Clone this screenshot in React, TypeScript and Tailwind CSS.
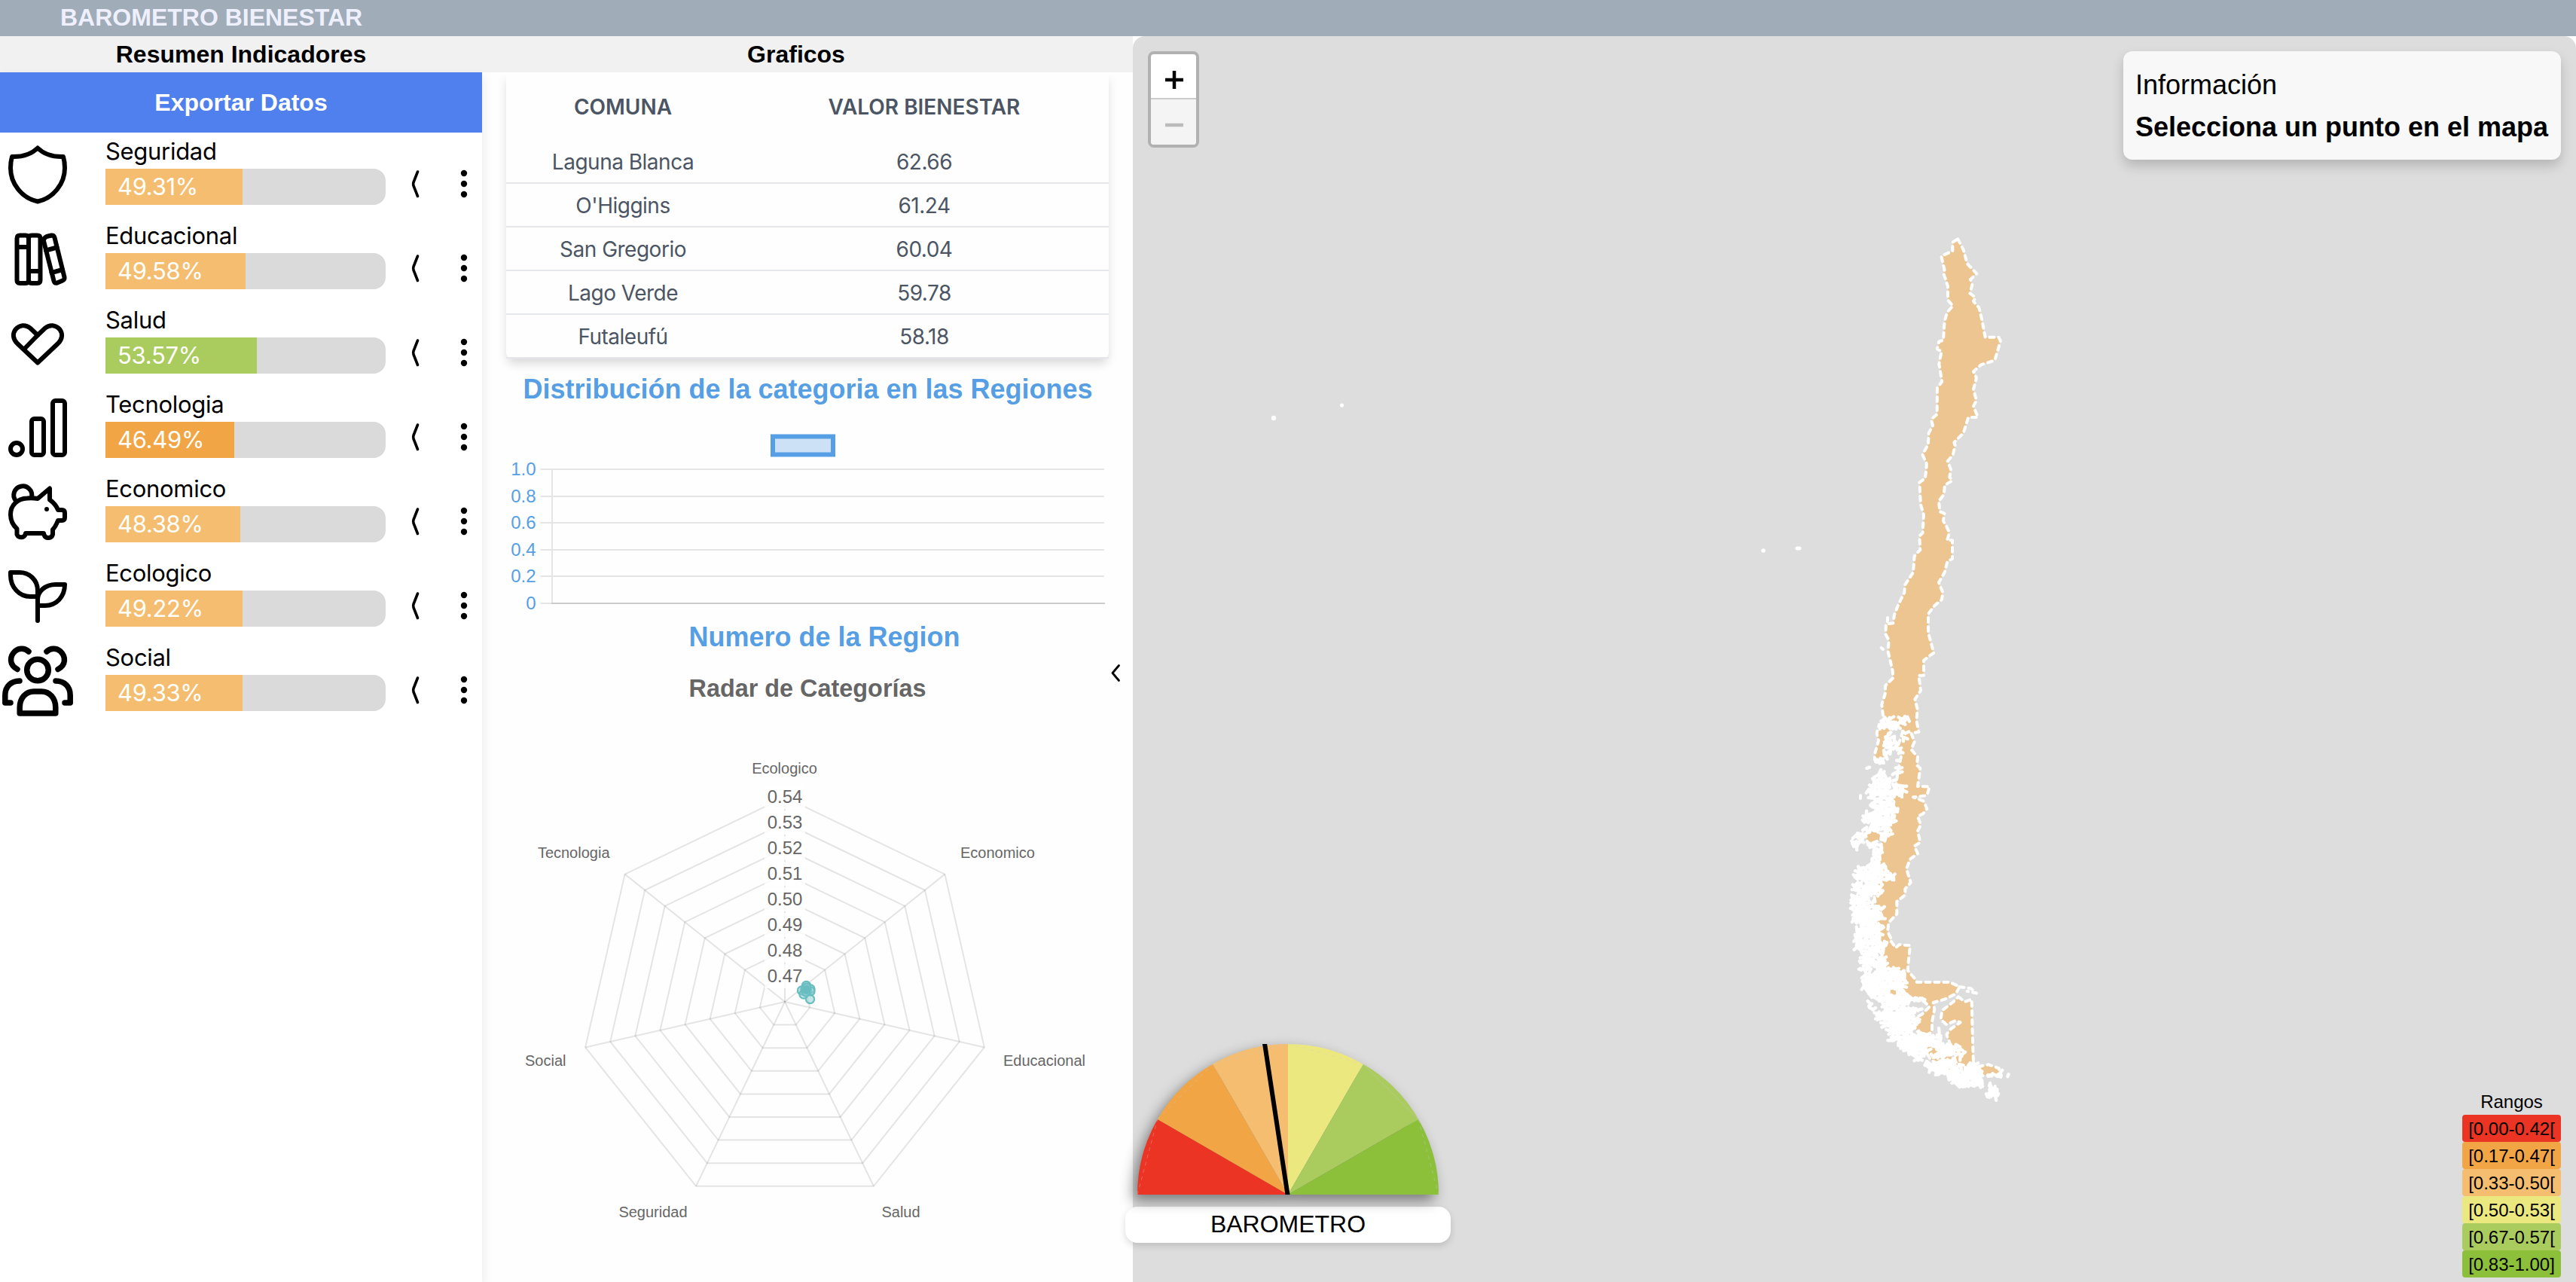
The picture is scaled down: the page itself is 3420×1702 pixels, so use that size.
import React from "react";

const HELV = "font-['Liberation_Sans',Arial,sans-serif]";

const strokeProps = {
  fill: "none",
  stroke: "#000",
  strokeWidth: 6,
  strokeLinecap: "round" as const,
  strokeLinejoin: "round" as const,
};

function Icon({ children }: { children: React.ReactNode }) {
  return (
    <svg className="h-28 w-[100px] shrink-0" viewBox="0 0 100 112" {...strokeProps}>
      {children}
    </svg>
  );
}

const ShieldIcon = () => (
  <Icon>
    <path d="M50 20.5C58 28.5 68 32.5 84 32C85.500 37 86 42 86 47C86 68 71 87 50 91.500C29 87 14 68 14 47C14 42 14.500 37 16 32C32 32.500 42 28.500 50 20.500Z" />
  </Icon>
);

const BooksIcon = () => (
  <Icon>
    <path d="M26.500 24.500H34Q38 24.500 38 28.500V84Q38 88 34 88H26.500Q22.500 88 22.500 84V28.500Q22.500 24.500 26.500 24.500Z" />
    <path d="M38 28.500Q38 24.500 42 24.500H49.500Q53.500 24.500 53.500 28.500V84Q53.500 88 49.500 88H42Q38 88 38 84" />
    <path d="M23 40H38M38 72H53" />
    <path d="M62 26L68 24.500Q71.500 24 72.500 27.500L85.500 80Q86 83.500 83 84.500L76 87.500Q72.500 88.500 71.500 85L58 32Q57.500 28 62 26Z" />
    <path d="M61 44.500L75.500 40.500M68.500 74L83 70" />
  </Icon>
);

const HeartIcon = () => (
  <Icon>
    <path d="M50 81.500L23 56C17 50 16.500 43 20.500 37.500C26 31 34 30.500 40 35.500L50 45L60 35.500C66 30.500 74 31 79.500 37.500C83.500 43 83 50 77 56Z" />
    <path d="M50 45L33 62.500" />
  </Icon>
);

const BarsIcon = () => (
  <Icon>
    <circle cx="22" cy="84" r="8" />
    <rect x="42" y="44" width="16" height="48" rx="3.500" />
    <rect x="70" y="20" width="16" height="72" rx="3.500" />
  </Icon>
);

const PiggyIcon = () => (
  <Icon>
    <path d="M50 38L66 24.500V39.500C71 43 75 48 77 53H82Q86 53 86 57V63Q86 67 82 67H77C75 72 73 76 70 79V85.500A6 6 0 0 1 58.500 86L58 84H34L33.500 86A6 6 0 0 1 22.500 85.500V78C17 73 14 66 14 59C14 47 23 38 36 37.500Q44 37 50 38Z" />
    <path d="M21 41A12 12 0 1 1 42 36" />
    <circle cx="62" cy="52" r="3" fill="#000" stroke="none" />
  </Icon>
);

const PlantIcon = () => (
  <Icon>
    <path d="M50 88V48C50 34 39 24 26 24H14V28C14 44 26 56 40 56H50" />
    <path d="M50 60C50 49 60 40 74 40H86C86 56 75 68 60 68H50" />
  </Icon>
);

const PeopleIcon = () => (
  <Icon>
    <g strokeWidth="7.500">
      <circle cx="50" cy="41.500" r="14.300" />
      <path d="M26.200 99V91C26.200 79 34 70 45 70H55C66 70 73.800 79 73.800 91V99Z" />
      <path d="M38 17C33 12 25 12 20 16.500C12 24 12.500 35 23 40.500" />
      <path d="M62 17C67 12 75 12 80 16.500C88 24 87.500 35 77 40.500" />
      <path d="M26 56C14 56 6.800 64 6.800 75V85H14" />
      <path d="M74 56C86 56 93.200 64 93.200 75V85H86" />
    </g>
  </Icon>
);

const indicators = [
  { name: "Seguridad", value: 49.31, color: "#f5bd6f", icon: <ShieldIcon /> },
  { name: "Educacional", value: 49.58, color: "#f5bd6f", icon: <BooksIcon /> },
  { name: "Salud", value: 53.57, color: "#aacb5d", icon: <HeartIcon /> },
  { name: "Tecnologia", value: 46.49, color: "#f2a544", icon: <BarsIcon /> },
  { name: "Economico", value: 48.38, color: "#f5bd6f", icon: <PiggyIcon /> },
  { name: "Ecologico", value: 49.22, color: "#f5bd6f", icon: <PlantIcon /> },
  { name: "Social", value: 49.33, color: "#f5bd6f", icon: <PeopleIcon /> },
];

function IndicatorRow({ item }: { item: (typeof indicators)[number] }) {
  return (
    <div className="flex h-28">
      {item.icon}
      <div className="ml-10 w-[372px] font-[Inter,sans-serif] text-[31px] tracking-[-0.3px]">
        <div className="h-12 leading-[49px] text-black">{item.name}</div>
        <div className="h-12 overflow-hidden rounded-r-2xl bg-[#dadada]">
          <div
            className="h-12 pl-4 leading-[48px] text-white"
            style={{ width: `${Math.round(item.value)}%`, backgroundColor: item.color }}
          >
            {item.value.toFixed(2)}%
          </div>
        </div>
      </div>
      <svg className="ml-8 h-28 w-4" viewBox="0 0 16 112" {...strokeProps} strokeWidth="3.600">
        <path d="M10.500 52L5 66Q4.300 68.300 5 70.500L10.500 84.500" />
      </svg>
      <svg className="ml-12 h-28 w-4" viewBox="0 0 16 112">
        <circle cx="8" cy="54" r="4.200" />
        <circle cx="8" cy="68" r="4.200" />
        <circle cx="8" cy="82" r="4.200" />
      </svg>
    </div>
  );
}

const comunas: [string, string][] = [
  ["Laguna Blanca", "62.66"],
  ["O'Higgins", "61.24"],
  ["San Gregorio", "60.04"],
  ["Lago Verde", "59.78"],
  ["Futaleufú", "58.18"],
];

function ComunaTable() {
  return (
    <div className="mx-8 h-[380px] rounded-b-lg bg-[#fefefe] font-[Inter,sans-serif] text-[28px] tracking-[-0.5px] text-[#4b5563] shadow-[0_8px_14px_-2px_rgba(0,0,0,0.16)]">
      <div className="grid h-[90px] grid-cols-[310px_490px] items-center pt-0.5 text-center font-semibold tracking-normal">
        <div>COMUNA</div>
        <div>VALOR BIENESTAR</div>
      </div>
      {comunas.map(([name, value]) => (
        <div
          key={name}
          className="grid h-[58px] grid-cols-[310px_490px] items-center border-b-2 border-gray-200 pt-0.5 text-center"
        >
          <div>{name}</div>
          <div>{value}</div>
        </div>
      ))}
    </div>
  );
}

function DistributionChart() {
  const ticks = ["1.0", "0.8", "0.6", "0.4", "0.2", "0"];
  const ys = [147, 183, 218, 254, 289, 325];
  return (
    <svg className={`block h-[404px] w-[864px] ${HELV}`} viewBox="0 0 864 404">
      <text x="432.500" y="53" fontSize="36" fontWeight="700" textAnchor="middle" fill="#579fe4">
        Distribución de la categoria en las Regiones
      </text>
      <rect x="386" y="103.500" width="80" height="24" fill="#cce1f6" stroke="#579fe4" strokeWidth="6" />
      {ticks.map((t, i) => (
        <g key={t}>
          <line x1="77.500" x2="826" y1={ys[i]} y2={ys[i]} stroke="#e5e5e5" strokeWidth="2" />
          <text x="71.500" y={ys[i] + 7.500} fontSize="24" textAnchor="end" fill="#579fe4">
            {t}
          </text>
        </g>
      ))}
      <line x1="93" x2="93" y1="147" y2="325" stroke="#e5e5e5" strokeWidth="2" />
      <line x1="92" x2="827" y1="325" y2="325" stroke="#cbcbcb" strokeWidth="2" />
      <text x="274.500" y="382" fontSize="36" fontWeight="700" fill="#579fe4">
        Numero de la Region
      </text>
    </svg>
  );
}

const RC = { x: 402, y: 450 };

function radarPoint(i: number, r: number): [number, number] {
  const a = (i * 2 * Math.PI) / 7;
  return [RC.x + Math.sin(a) * r, RC.y - Math.cos(a) * r];
}

function RadarChart() {
  const R = 271.7;
  const ticks = ["0.47", "0.48", "0.49", "0.50", "0.51", "0.52", "0.53", "0.54"];
  const labels: [string, number, number, "start" | "middle" | "end"][] = [
    ["Ecologico", 401.5, 146.5, "middle"],
    ["Economico", 635, 258.5, "start"],
    ["Educacional", 692, 534.5, "start"],
    ["Salud", 556, 736, "middle"],
    ["Seguridad", 227, 736, "middle"],
    ["Social", 111.5, 534.5, "end"],
    ["Tecnologia", 169.5, 258.5, "end"],
  ];
  const dots = [
    [430.5, 428.5],
    [424.5, 435],
    [436, 433],
    [429, 433],
    [432, 436],
    [427, 440],
    [436, 436],
    [431, 431],
    [430, 437],
    [435.5, 446.5],
  ];
  return (
    <svg className={`block h-[802px] w-[864px] ${HELV}`} viewBox="0 0 864 802">
      <text x="274.500" y="45" fontSize="32.400" fontWeight="700" fill="#666">
        Radar de Categorías
      </text>
      <g fill="none" stroke="#000" strokeOpacity="0.1" strokeWidth="2">
        {ticks.map((t, k) => (
          <polygon
            key={t}
            points={[0, 1, 2, 3, 4, 5, 6].map((i) => radarPoint(i, (R * (k + 1)) / 8).join(",")).join(" ")}
          />
        ))}
        {[0, 1, 2, 3, 4, 5, 6].map((i) => {
          const [x, y] = radarPoint(i, R);
          return <line key={i} x1={RC.x} y1={RC.y} x2={x} y2={y} />;
        })}
      </g>
      {ticks.map((t, k) => {
        const y = RC.y - (R * (k + 1)) / 8;
        return (
          <g key={t}>
            <rect x={RC.x - 27} y={y - 16} width="54" height="32" fill="#fff" fillOpacity="0.8" />
            <text x={RC.x} y={y + 7.500} fontSize="24" textAnchor="middle" fill="#666">
              {t}
            </text>
          </g>
        );
      })}
      {labels.map(([t, x, y, anchor]) => (
        <text key={t} x={x} y={y} fontSize="20" textAnchor={anchor} fill="#666">
          {t}
        </text>
      ))}
      <g fill="#8fd0d1" fillOpacity="0.55" stroke="#68bdc0" strokeWidth="2.200">
        {dots.map(([x, y], i) => (
          <circle key={i} cx={x} cy={y} r="5.600" />
        ))}
      </g>
      <circle cx="430.500" cy="434" r="6" fill="#68bdc0" />
    </svg>
  );
}

type Pt = [number, number];

function shift(dx: number, dy: number, flat: number[]): Pt[] {
  const out: Pt[] = [];
  for (let i = 0; i < flat.length; i += 2) out.push([flat[i] + dx, flat[i + 1] + dy]);
  return out;
}

const toPath = (pts: Pt[]) => "M" + pts.map((p) => p.join(" ")).join("L") + "Z";

const mainland = toPath([
  ...shift(90, 0, [
    418, 52, 430, 75, 440, 95, 455, 150, 493, 190, 468, 213, 475, 235, 466, 268, 488, 285, 480, 300, 502, 325, 513, 370,
    527, 443, 580, 443, 588, 458, 565, 535, 510, 553, 480, 580, 492, 605, 480, 650, 492, 695, 480, 718, 498, 762, 460,
    762, 440, 825, 403, 862, 407, 875, 398, 912, 377, 937, 390, 970,
  ]),
  ...shift(90, 960, [
    385, 40, 395, 55, 366, 72, 362, 110, 342, 135, 346, 178, 364, 185, 360, 215, 372, 235, 384, 262, 375, 292, 396, 292,
    396, 365, 376, 377, 365, 420, 342, 460, 358, 500, 354, 528, 325, 552, 300, 585, 300, 660, 322, 740, 282, 770, 282,
    830, 262, 830, 270, 890, 247, 925, 257, 965, 253, 1010, 262, 1055,
  ]),
  ...shift(0, 1890, [
    322, 130, 335, 165, 322, 195, 348, 225, 345, 258, 358, 270, 348, 342, 395, 343, 385, 378, 330, 385, 370, 400, 385,
    430, 370, 450, 348, 462, 360, 495, 348, 520, 358, 565, 335, 580, 348, 610, 318, 632, 303, 670, 320, 725, 298, 750,
    298, 775, 265, 800, 265, 850, 232, 885, 228, 920, 240, 945,
  ]),
  ...shift(0, 2790, [
    236, 50, 260, 85, 275, 72, 318, 76, 312, 130, 308, 175, 340, 212, 345, 222, 475, 222, 515, 240, 500, 268, 455, 290,
    410, 303, 415, 330, 405, 380, 405, 420, 385, 432, 345, 418, 330, 395, 355, 380, 345, 360, 365, 350, 395, 320, 375,
    300, 335, 285, 300, 300, 280, 330, 235, 260, 215, 150, 200, 90, 195, 0,
  ]),
  ...shift(0, 1890, [
    175, 780, 170, 720, 190, 660, 200, 600, 205, 560, 230, 520, 250, 440, 255, 380, 270, 280, 285, 210, 270, 180, 290,
    120, 245, 85, 215, 90, 207, 60,
  ]),
  ...shift(90, 960, [
    120, 990, 115, 945, 128, 905, 130, 870, 160, 840, 158, 810, 140, 735, 143, 690, 130, 665, 132, 625, 160, 622, 165,
    590, 180, 550, 205, 500, 207, 470, 240, 420, 245, 355, 268, 330, 265, 275, 278, 262, 282, 190, 270, 150, 265, 62,
    288, 45, 293, 0,
  ]),
  ...shift(90, 0, [
    293, 945, 277, 910, 300, 870, 302, 825, 318, 795, 312, 770, 335, 750, 336, 645, 355, 620, 343, 550, 353, 500, 336,
    490, 343, 460, 360, 455, 365, 380, 375, 345, 398, 318, 378, 295, 378, 240, 360, 185, 365, 175, 352, 120, 397, 100,
    397, 65,
  ]),
]);

const islands = [
  toPath(
    shift(0, 2790, [
      510, 280, 535, 300, 563, 290, 566, 420, 570, 548, 530, 560, 500, 540, 480, 475, 463, 430, 480, 408, 518, 382, 500,
      375, 462, 390, 440, 370, 445, 335, 490, 300,
    ]),
  ),
  toPath(shift(0, 1890, [195, 95, 240, 105, 225, 150, 212, 180, 215, 230, 180, 245, 175, 220, 192, 160, 185, 130])),
  toPath(shift(0, 1890, [140, 530, 180, 518, 205, 535, 200, 555, 150, 575])),
  toPath(shift(0, 2790, [590, 558, 630, 550, 672, 565, 668, 598, 640, 590, 600, 595])),
  toPath(shift(0, 2790, [340, 435, 380, 440, 420, 470, 470, 500, 500, 545, 560, 560, 600, 600, 590, 630, 500, 600, 400, 530])),
];

// Rows of the southern archipelago: [y, left, right] in map units.
const archipelago: [number, number, number][] = [
  ...(
    [
      [70, 215, 250], [72, 270, 318], [92, 200, 300], [104, 190, 270], [128, 232, 244], [125, 290, 315], [150, 215, 262],
      [152, 285, 305], [170, 210, 270], [188, 225, 285], [205, 215, 245], [208, 270, 288], [225, 215, 232],
      [240, 175, 218], [240, 265, 272], [265, 145, 160], [268, 262, 285], [285, 192, 216], [288, 250, 285],
      [300, 178, 225], [315, 170, 236], [318, 250, 260], [330, 165, 238], [340, 245, 300], [345, 158, 240],
      [360, 145, 300], [375, 158, 290], [390, 155, 245], [405, 165, 245], [420, 158, 250], [438, 175, 275],
      [452, 140, 230], [466, 130, 260], [480, 128, 262], [484, 190, 262], [496, 160, 240], [512, 130, 240],
      [530, 110, 130], [530, 205, 245], [545, 90, 135], [548, 200, 225], [562, 85, 130], [575, 85, 115],
      [576, 150, 200], [590, 95, 112], [592, 170, 210], [608, 170, 208], [625, 168, 200], [640, 165, 195],
      [655, 150, 220], [668, 110, 225], [682, 100, 230], [695, 95, 258], [710, 98, 258], [725, 140, 205],
      [730, 95, 130], [742, 90, 205], [755, 90, 205], [768, 110, 200], [782, 82, 150], [796, 82, 155], [800, 165, 175],
      [810, 82, 150], [824, 85, 215], [838, 90, 190], [852, 90, 210], [866, 90, 215], [880, 85, 185], [895, 120, 210],
      [910, 100, 210], [925, 105, 185], [930, 185, 210], [940, 95, 195], [955, 95, 200], [970, 100, 230],
      [984, 98, 215], [998, 120, 218], [1012, 130, 190], [1026, 120, 222], [1040, 115, 222], [1055, 135, 225],
      [1070, 110, 160], [1070, 180, 270], [1084, 135, 160], [1084, 175, 300], [1098, 125, 300], [1112, 130, 295],
      [1126, 130, 300], [1140, 128, 300], [1154, 140, 235], [1154, 265, 295], [1168, 150, 235], [1168, 265, 300],
      [1182, 165, 325],
    ] as [number, number, number][]
  ).map(([y, a, b]): [number, number, number] => [y + 1890, a, b]),
  ...(
    [
      [290, 320, 375], [294, 190, 310], [300, 148, 156], [306, 205, 315], [315, 155, 165], [318, 210, 260],
      [328, 160, 180], [330, 220, 360], [344, 175, 335], [356, 190, 330], [368, 180, 355], [382, 205, 350],
      [396, 210, 340], [410, 225, 330], [412, 430, 440], [424, 235, 325], [428, 345, 385], [438, 240, 445],
      [452, 235, 445], [466, 265, 450], [480, 275, 385], [478, 410, 515], [492, 290, 400], [492, 425, 530],
      [504, 310, 380], [508, 420, 532], [518, 330, 375], [518, 400, 460], [522, 510, 525], [532, 335, 365],
      [534, 430, 490], [546, 375, 500], [550, 550, 585], [558, 385, 520], [562, 560, 600], [572, 390, 600],
      [584, 420, 510], [586, 530, 605], [596, 465, 600], [608, 465, 590], [620, 485, 595], [632, 505, 590],
      [592, 630, 660], [575, 672, 686], [598, 670, 686], [594, 706, 710], [620, 598, 608], [640, 600, 608],
      [632, 625, 640], [645, 630, 660], [658, 630, 670], [670, 620, 675], [682, 652, 666],
    ] as [number, number, number][]
  ).map(([y, a, b]): [number, number, number] => [y + 2790, a, b]),
];

// Small deterministic generator so the fragmented coast line is stable.
function scatter(): string {
  let s = 12345;
  const rnd = () => {
    s = (s * 1103515245 + 12345) % 2147483648;
    return s / 2147483648;
  };
  let d = "";
  for (const [y, a, b] of archipelago) {
    const wide = b - a > 60;
    const n = Math.max(1, Math.round((b - a) / (wide ? 10 : 12)));
    for (let i = 0; i < n; i++) {
      const x = a + ((i + 0.5) / n) * (b - a) + (rnd() - 0.5) * 5;
      const t = rnd() * Math.PI;
      const l = 4 + rnd() * 6;
      const yy = y + (rnd() - 0.5) * 6;
      const ex = Math.cos(t) * l;
      const ey = Math.sin(t) * l;
      d += `M${(x - ex).toFixed(1)} ${(yy - ey).toFixed(1)}L${(x + ex).toFixed(1)} ${(yy + ey).toFixed(1)}`;
    }
  }
  return d;
}

const archipelagoPath = scatter();

function ChileMap() {
  return (
    <svg className="absolute inset-0 h-full w-full" viewBox="1504 48 1916 1654">
      <g transform="translate(2430 300) scale(0.33333)" strokeLinecap="round" strokeLinejoin="round">
        <g fill="#ecc590" stroke="#fff" strokeWidth="12" strokeDasharray="18 18">
          <path d={mainland} />
          {islands.map((d) => (
            <path key={d} d={d} />
          ))}
          <path fill="none" d="M515 3030L560 3037L582 3056L545 3048M228 1560V1575M203 1680L210 1686M120 2268V2280" />
        </g>
        <path d={archipelagoPath} fill="none" stroke="#fff" strokeWidth="13" />
      </g>
      <g fill="#fff">
        <circle cx="1691" cy="555" r="3.200" />
        <circle cx="1781.500" cy="538" r="2.600" />
        <circle cx="2341" cy="731" r="2.800" />
        <rect x="2383.500" y="725.500" width="8" height="5" rx="2.500" />
      </g>
    </svg>
  );
}

function Gauge() {
  const colors = ["#eb3423", "#f2a544", "#f5bd6f", "#ebe880", "#aacb5d", "#8cc03b"];
  const pt = (i: number) => {
    const a = Math.PI - (i * Math.PI) / 6;
    return `${200 + 200 * Math.cos(a)} ${200 - 200 * Math.sin(a)}`;
  };
  return (
    <div className="absolute top-[1386px] left-[1494px] flex w-[432px] flex-col items-center">
      <svg
        className="z-10 h-[200px] w-[400px] drop-shadow-[-6px_8px_9px_rgba(0,0,0,0.45)]"
        viewBox="0 0 400 200"
      >
        {colors.map((c, i) => (
          <g key={c}>
            <path d={`M200 200L${pt(i)}A200 200 0 0 1 ${pt(i + 1)}Z`} fill={c} />
            <path
              d={`M${pt(i)}L${pt(i + 1)}`}
              stroke="#cfcfcf"
              strokeOpacity="0.5"
              strokeWidth="0.700"
              strokeDasharray={i === 4 ? undefined : "5 5"}
            />
          </g>
        ))}
        <line x1="199.800" y1="202" x2="168.800" y2="-2" stroke="#000" strokeWidth="6" />
      </svg>
      <div
        className={`mt-4 h-12 w-full rounded-2xl bg-white text-center text-[32px] leading-[47px] text-black shadow-[0_4px_10px_rgba(0,0,0,0.14)] ${HELV}`}
      >
        BAROMETRO
      </div>
    </div>
  );
}

const ranges = [
  ["[0.00-0.42[", "bg-[#eb3423]"],
  ["[0.17-0.47[", "bg-[#f2a544]"],
  ["[0.33-0.50[", "bg-[#f5bd6f]"],
  ["[0.50-0.53[", "bg-[#ebe880]"],
  ["[0.67-0.57[", "bg-[#aacb5d]"],
  ["[0.83-1.00]", "bg-[#8cc03b]"],
];

export default function App() {
  return (
    <div className={`relative flex h-[1702px] w-[3420px] flex-col overflow-hidden bg-white text-black ${HELV}`}>
      <header className="h-12 shrink-0 bg-[#a0acb8] pl-20 text-[32px] leading-[47px] font-bold text-[#eef0fe]">
        BAROMETRO BIENESTAR
      </header>
      <main className="flex flex-1">
        <section className="z-10 flex w-[640px] flex-col">
          <h2 className="h-12 bg-[#f1f1f1] text-center text-[32px] leading-[48px] font-bold">Resumen Indicadores</h2>
          <div className="flex-1 bg-white shadow-[4px_4px_12px_rgba(0,0,0,0.06)]">
            <button className="block h-20 w-full bg-[#4f80ee] text-center text-[32px] leading-[80px] font-bold text-white">
              Exportar Datos
            </button>
            {indicators.map((item) => (
              <IndicatorRow key={item.name} item={item} />
            ))}
          </div>
        </section>

        <section className="relative w-[864px] bg-[#fefefe]">
          <h2 className="relative z-20 h-12 bg-[#f1f1f1] pr-[30px] text-center text-[32px] leading-[48px] font-bold">
            Graficos
          </h2>
          <ComunaTable />
          <DistributionChart />
          <RadarChart />
          <svg className="absolute top-[830px] right-[15px] h-8 w-4" viewBox="0 0 16 32" {...strokeProps} strokeWidth="2.800">
            <path d="M12.500 5.500L4 15.500L12.500 25.500" />
          </svg>
        </section>

        <section className="relative flex-1 overflow-hidden rounded-t-2xl bg-[#ddd]">
          <ChileMap />
          <div className="absolute top-5 left-5 h-32 w-[68px] overflow-hidden rounded-lg border-4 border-[#b1b1b1] bg-white">
            <button className="flex h-[60px] w-full items-center justify-center border-b-2 border-[#ccc] pt-2.5 pl-0.5">
              <svg className="h-6 w-6" viewBox="0 0 24 24" stroke="#000" strokeWidth="4.500">
                <path d="M0 12H24M12 0V24" />
              </svg>
            </button>
            <button className="flex h-[60px] w-full items-center justify-center bg-[#f4f4f4] pt-2 pl-0.5">
              <svg className="h-6 w-6" viewBox="0 0 24 24" stroke="#bbb" strokeWidth="4.500">
                <path d="M0 12H24" />
              </svg>
            </button>
          </div>
          <div className="absolute top-5 right-5 h-36 w-[581px] rounded-xl bg-[#f8f8f8] pt-[27px] pl-4 text-[36px] whitespace-nowrap shadow-[0_8px_16px_rgba(0,0,0,0.18)]">
            <p className="leading-9">Información</p>
            <p className="mt-5 leading-9 font-bold">Selecciona un punto en el mapa</p>
          </div>
          <div className="absolute right-5 bottom-1.5 w-[131px] text-center text-[24px]">
            <p className="h-9 leading-[38px]">Rangos</p>
            {ranges.map(([label, bg]) => (
              <div key={label} className={`h-9 rounded ${bg} leading-[37px]`}>
                {label}
              </div>
            ))}
          </div>
        </section>
      </main>
      <div className="pointer-events-none absolute inset-0 z-20">
        <Gauge />
      </div>
    </div>
  );
}
